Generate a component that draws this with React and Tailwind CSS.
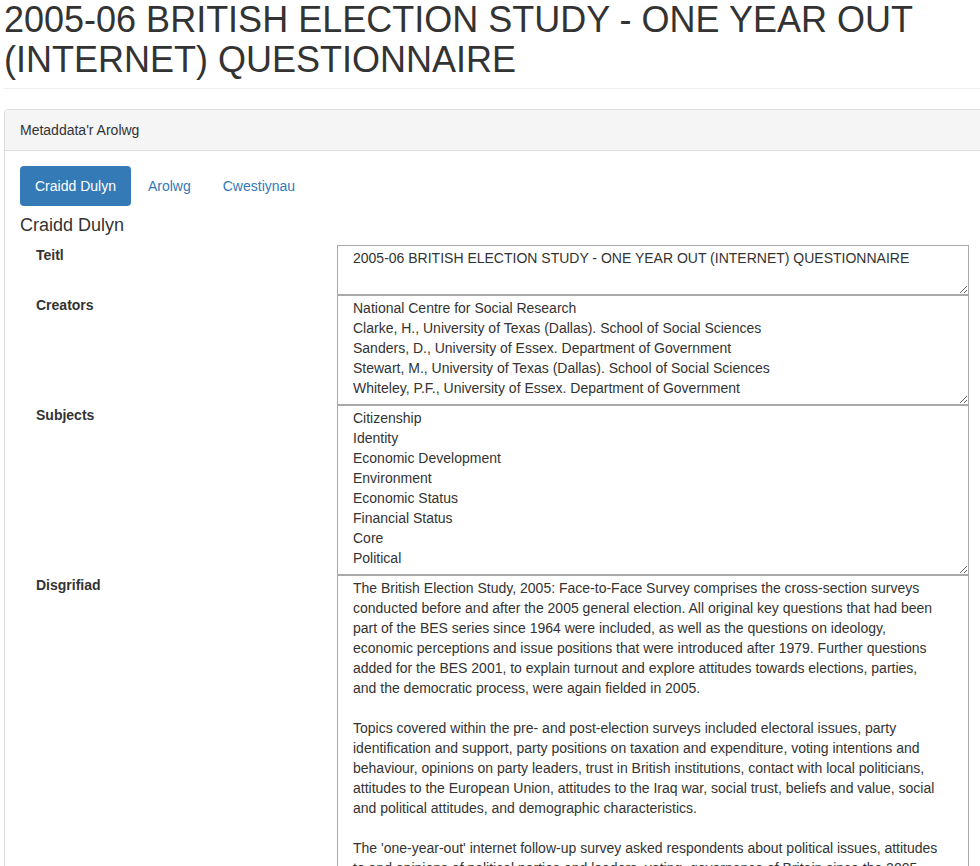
import React from 'react';

const creators = [
  'National Centre for Social Research',
  'Clarke, H., University of Texas (Dallas). School of Social Sciences',
  'Sanders, D., University of Essex. Department of Government',
  'Stewart, M., University of Texas (Dallas). School of Social Sciences',
  'Whiteley, P.F., University of Essex. Department of Government',
].join('\n');

const subjects = [
  'Citizenship',
  'Identity',
  'Economic Development',
  'Environment',
  'Economic Status',
  'Financial Status',
  'Core',
  'Political',
].join('\n');

// line breaks kept as in the reference so wrapping doesn't drift
const description = [
  'The British Election Study, 2005: Face-to-Face Survey comprises the cross-section surveys',
  'conducted before and after the 2005 general election. All original key questions that had been',
  'part of the BES series since 1964 were included, as well as the questions on ideology,',
  'economic perceptions and issue positions that were introduced after 1979. Further questions',
  'added for the BES 2001, to explain turnout and explore attitudes towards elections, parties,',
  'and the democratic process, were again fielded in 2005.',
  '',
  'Topics covered within the pre- and post-election surveys included electoral issues, party',
  'identification and support, party positions on taxation and expenditure, voting intentions and',
  'behaviour, opinions on party leaders, trust in British institutions, contact with local politicians,',
  'attitudes to the European Union, attitudes to the Iraq war, social trust, beliefs and value, social',
  'and political attitudes, and demographic characteristics.',
  '',
  "The 'one-year-out' internet follow-up survey asked respondents about political issues, attitudes",
  'to and opinions of political parties and leaders, voting, governance of Britain since the 2005',
  'general election, and a range of other social and political topics.',
].join('\n');

const fields = [
  { label: 'Teitl', value: '2005-06 BRITISH ELECTION STUDY - ONE YEAR OUT (INTERNET) QUESTIONNAIRE', h: 'h-[50px]' },
  { label: 'Creators', value: creators, h: 'h-[110px]' },
  { label: 'Subjects', value: subjects, h: 'h-[170px]' },
  { label: 'Disgrifiad', value: description, h: 'h-[420px]' },
];

const App = () => {
  return (
    <div className="h-[866px] w-[980px] overflow-hidden bg-white text-[#333] text-[14px] leading-[20px] font-['Liberation_Sans',Arial,sans-serif]">
      <div className="pl-[4px] w-[994px]">
        {/* Page header */}
        <div className="pb-[9px] border-b border-[#eee] mb-[20px]">
          <h1 className="text-[36px] leading-[1.1] font-normal">
            2005-06 BRITISH ELECTION STUDY - ONE YEAR OUT (INTERNET) QUESTIONNAIRE
          </h1>
        </div>

        {/* Panel */}
        <div className="border border-[#ddd] rounded-[4px]">
          <div className="bg-[#f5f5f5] border-b border-[#ddd] px-[15px] py-[10px] rounded-t-[4px]">
            Metaddata'r Arolwg
          </div>
          <div className="p-[15px]">
            <ul className="flex">
              <li>
                <a className="block px-[15px] py-[10px] rounded-[4px] bg-[#337ab7] text-white">Craidd Dulyn</a>
              </li>
              <li className="ml-[2px]">
                <a className="block px-[15px] py-[10px] rounded-[4px] text-[#337ab7]">Arolwg</a>
              </li>
              <li className="ml-[2px]">
                <a className="block px-[15px] py-[10px] rounded-[4px] text-[#337ab7]">Cwestiynau</a>
              </li>
            </ul>

            <h4 className="text-[18px] leading-[1.1] font-normal mt-[10px] mb-[9px]">Craidd Dulyn</h4>

            <div className="flex flex-col">
              {fields.map(f => (
                <div key={f.label} className="flex">
                  <div className="w-[317px] pl-[16px] font-bold">{f.label}</div>
                  <textarea
                    readOnly
                    value={f.value}
                    className={`w-[632px] ${f.h} border border-[#a9a9a9] pt-[2px] px-[15px] pb-[2px] text-[14px] leading-[20px] text-[#333] resize-y overflow-hidden outline-none whitespace-pre-wrap font-['Liberation_Sans',Arial,sans-serif]`}
                  />
                </div>
              ))}
            </div>
          </div>
        </div>
      </div>
    </div>
  );
};

export default App;
